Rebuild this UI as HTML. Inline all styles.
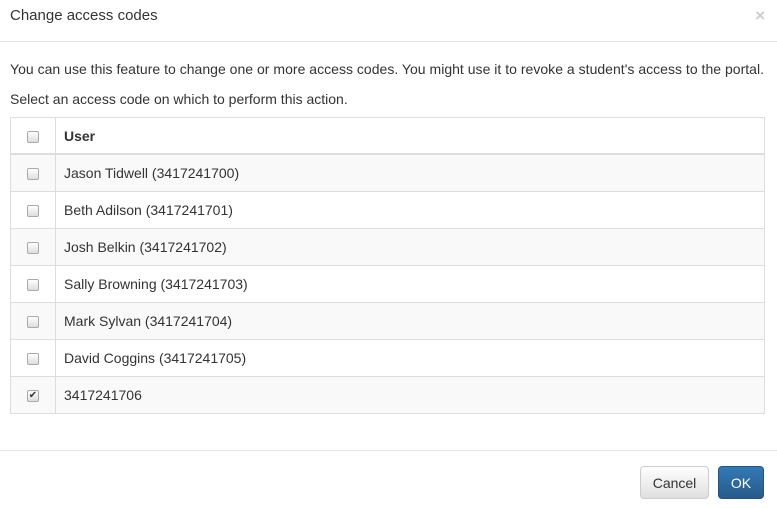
<!DOCTYPE html><html><head><style>
body{margin:0;width:777px;height:508px;background:#fff;font-family:"Liberation Sans",sans-serif;font-size:14px;color:#333;position:relative;overflow:hidden}
.hd{position:absolute;left:0;top:0;width:777px;height:41px;border-bottom:1px solid #e5e5e5}
.hd h4{margin:0;position:absolute;left:10px;top:6px;font-size:15px;font-weight:normal;line-height:20px}
.x{position:absolute;right:12px;top:6px;color:#ccc;font-size:17px;font-weight:bold}
p{position:absolute;left:10px;margin:0;font-size:14px}
table{position:absolute;left:10px;top:117px;width:755px;border-collapse:collapse}
td,th{border:1px solid #ddd;height:36px;padding:0 0 0 8px;text-align:left;font-size:14px}
th{border-bottom:2px solid #ddd;height:35px}
td:first-child,th:first-child{width:44px;padding:0;text-align:center}
tbody tr:nth-child(odd) td{background:#f9f9f9}
.cb{display:inline-block;width:10px;height:10px;border:1px solid #aaa;border-radius:2px;background:linear-gradient(#fff,#ddd);vertical-align:middle;font-size:10px;line-height:10px;color:#333}
.ft{position:absolute;left:0;top:450px;width:777px;border-top:1px solid #e5e5e5}
.btn{position:absolute;top:466px;height:33px;border-radius:4px;font-size:14px;line-height:33px;text-align:center;box-sizing:border-box}
</style></head><body>
<div class="hd"><h4>Change access codes</h4><span class="x">×</span></div>
<p style="top:61px;letter-spacing:0.02px">You can use this feature to change one or more access codes. You might use it to revoke a student's access to the portal.</p>
<p style="top:91px">Select an access code on which to perform this action.</p>
<table><thead><tr><th><span class="cb"></span></th><th>User</th></tr></thead><tbody>
<tr><td><span class="cb"></span></td><td>Jason Tidwell (3417241700)</td></tr>
<tr><td><span class="cb"></span></td><td>Beth Adilson (3417241701)</td></tr>
<tr><td><span class="cb"></span></td><td>Josh Belkin (3417241702)</td></tr>
<tr><td><span class="cb"></span></td><td>Sally Browning (3417241703)</td></tr>
<tr><td><span class="cb"></span></td><td>Mark Sylvan (3417241704)</td></tr>
<tr><td><span class="cb"></span></td><td>David Coggins (3417241705)</td></tr>
<tr><td><span class="cb">✔</span></td><td>3417241706</td></tr>
</tbody></table>
<div class="ft"></div>
<div class="btn" style="left:640px;width:69px;border:1px solid #ccc;background:linear-gradient(#fff,#e0e0e0);color:#333">Cancel</div>
<div class="btn" style="left:718px;width:46px;border:1px solid #245580;background:linear-gradient(#337ab7,#265a88);color:#fff">OK</div>
</body></html>
